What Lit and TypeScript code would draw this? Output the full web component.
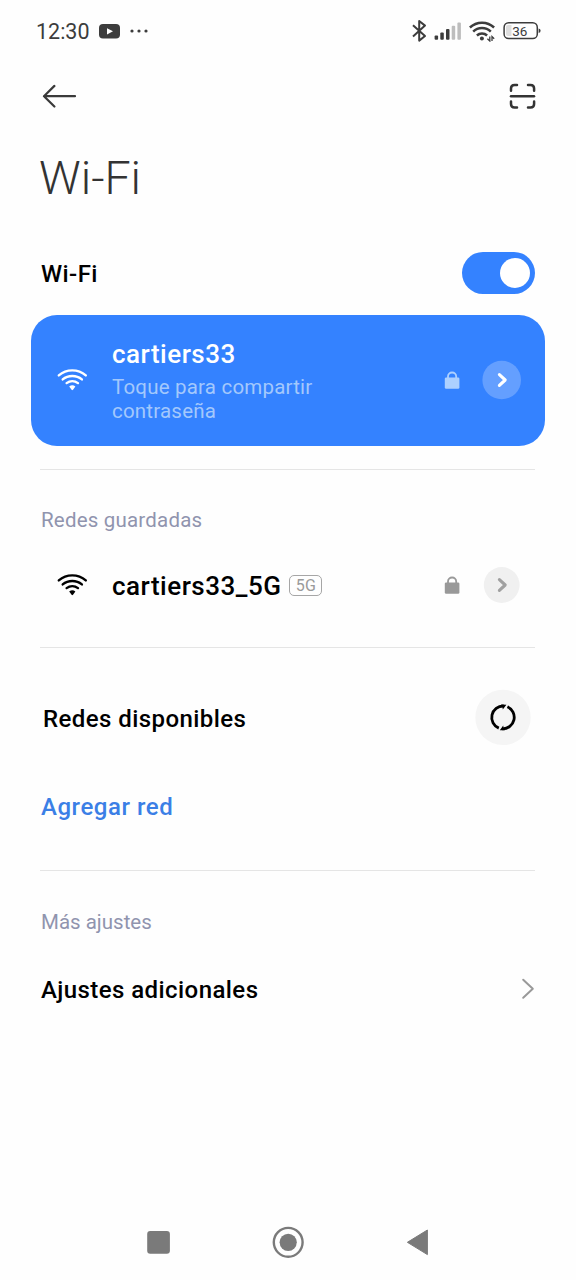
import { LitElement, html, css, svg } from "lit";
import { customElement, property } from "lit/decorators.js";

const glyph = (x: number, y: number, w: number, h: number, body: unknown) => html`
  <svg width=${w} height=${h} viewBox="${x} ${y} ${w} ${h}" fill="none" aria-hidden="true">${body}</svg>`;

const baseStyles = css`
  :host { display: block; font-family: Roboto, "Noto Sans", sans-serif; color: #000; }
  * { box-sizing: border-box; }
  svg { display: block; flex: none; }
`;

const wifiGlyph = glyph(57, 368, 31, 24, svg`
  <g stroke="currentColor" stroke-width="2.4" stroke-linecap="round">
    <path d="M58.8 375.4A20.5 20.5 0 0 1 85.8 375.4"/>
    <path d="M62.7 379.4A15 15 0 0 1 81.9 379.4"/>
    <path d="M66.6 383.1A9.6 9.6 0 0 1 78 383.1"/>
  </g>
  <path d="M69.2 386.4Q72.3 384.2 75.4 386.4L73 389.8Q72.3 390.6 71.6 389.8Z" fill="currentColor"/>`);

const lockGlyph = glyph(444, 370, 16, 19, svg`
  <rect x="444.8" y="376.4" width="14.6" height="11.4" rx="1.4" fill="currentColor"/>
  <path d="M448 377.5V375.6a4.1 4.1 0 0 1 8.2 0V377.5" stroke="currentColor" stroke-width="1.8"/>`);

@customElement("status-bar")
class StatusBar extends LitElement {
  static styles = [baseStyles, css`
    .bar { height: 62px; padding: 0 34px 0 36px; display: flex; align-items: center; justify-content: space-between; color: #3c3c3c; }
    .side { display: flex; align-items: center; }
    .time { font-size: 21.5px; line-height: 26px; width: 63px; padding-top: 1px; }
    .more { margin-left: 9px; }
    .right { gap: 7px; }
    .battery { font: 400 13.5px Roboto, sans-serif; }
  `];
  render() {
    return html`<div class="bar">
      <div class="side">
        <span class="time">12:30</span>
        ${glyph(99, 20, 21, 22, svg`
          <rect x="99" y="24" width="21" height="14.6" rx="4" fill="#3c3c3c"/>
          <path d="M107 28.2L113 31.3L107 34.4Z" fill="#fff"/>`)}
        <span class="more">${glyph(129, 20, 20, 22, svg`
          <g fill="#3c3c3c"><circle cx="132" cy="31" r="1.6"/><circle cx="139" cy="31" r="1.6"/><circle cx="146" cy="31" r="1.6"/></g>`)}</span>
      </div>
      <div class="side right">
        ${glyph(411, 19, 16, 24, svg`<path d="M413 25.3L425 36L419.2 40.6V21L425 25.6L413 36.4" stroke="#3c3c3c" stroke-width="2" stroke-linejoin="round"/>`)}
        ${glyph(434, 20, 28, 22, svg`
          <g fill="#3c3c3c"><rect x="434.6" y="35.6" width="3.5" height="4.2" rx="1"/><rect x="440.3" y="32.4" width="3.5" height="7.4" rx="1"/><rect x="446" y="29.1" width="3.5" height="10.7" rx="1"/></g>
          <g fill="#bdbdbd"><rect x="451.7" y="25.8" width="3.5" height="14" rx="1"/><rect x="457.4" y="22.6" width="3.5" height="17.2" rx="1"/></g>`)}
        ${glyph(469, 20, 27, 22, svg`
          <g stroke="#3c3c3c" stroke-width="2.5"><path d="M469.9 27.5A17.5 17.5 0 0 1 494.1 27.5"/><path d="M473.2 31.7A12.4 12.4 0 0 1 490.8 31.7"/><path d="M476.9 35.5A7.6 7.6 0 0 1 487.1 35.5"/></g>
          <circle cx="481.9" cy="38.6" r="2" fill="#3c3c3c"/>
          <path d="M489.8 36.6V41L487.4 38.8M492 41V36.6L494.2 38.8" stroke="#3c3c3c" stroke-width="1.3"/>`)}
        ${glyph(503, 20, 39, 22, svg`
          <path d="M508 25H511.5V36H508A2 2 0 0 1 506 34V27A2 2 0 0 1 508 25Z" fill="#dedede"/>
          <rect x="504.1" y="22.8" width="33.2" height="15.8" rx="4.6" stroke="#3c3c3c" stroke-width="1.5"/>
          <path d="M538.6 28.4Q540.6 28.6 540.6 30.7Q540.6 32.8 538.6 33Z" fill="#3c3c3c"/>
          <text class="battery" x="519.8" y="35.7" text-anchor="middle" fill="#3c3c3c">36</text>`)}
      </div>
    </div>`;
  }
}

@customElement("network-row")
class NetworkRow extends LitElement {
  @property() name = "";
  @property() detail = "";
  @property() band = "";
  @property({ type: Boolean }) connected = false;
  static styles = [baseStyles, css`
    .row { display: flex; align-items: center; margin: 0 31px; padding-left: 26px; height: 76px; }
    .connected { height: 131px; border-radius: 26px; background: #3482ff; color: #fff; }
    .text { flex: 1; margin-left: 24px; padding-top: 1px; }
    .line { display: flex; align-items: center; gap: 8px; }
    .name { font-size: 26px; line-height: 30px; font-weight: 500; letter-spacing: .5px; }
    .detail { width: 230px; font-size: 20.5px; line-height: 24px; color: #a3c8fc; margin-top: 6px; letter-spacing: .2px; }
    .band { height: 21px; width: 33px; border: 1.5px solid #a6a6a6; border-radius: 5px; font-size: 16px; line-height: 20px; text-align: center; color: #9a9a9a; letter-spacing: .3px; margin-bottom: 1px; }
    .lock { color: #999; margin-right: 22px; }
    .connected .lock { color: #add0ff; }
    .go { width: 63px; }
  `];
  render() {
    return html`<div class="row ${this.connected ? "connected" : ""}">
      ${wifiGlyph}
      <div class="text">
        <div class="line"><span class="name">${this.name}</span>${this.band ? html`<span class="band">${this.band}</span>` : ""}</div>
        ${this.detail ? html`<div class="detail">${this.detail}</div>` : ""}
      </div>
      <span class="lock">${lockGlyph}</span>
      <span class="go">${glyph(482, 360, 40, 40, svg`
        <circle cx="501.7" cy="380" r=${this.connected ? 19.3 : 17.9} fill=${this.connected ? "#649fff" : "#f0f0f0"}/>
        <path d="M499.4 374.6L505.2 380L499.4 385.4" stroke=${this.connected ? "#fff" : "#a0a0a0"} stroke-width="3.1" stroke-linecap="round" stroke-linejoin="round"/>`)}</span>
    </div>`;
  }
}

@customElement("nav-bar")
class NavBar extends LitElement {
  static styles = [baseStyles, css`
    .nav { display: flex; align-items: center; justify-content: space-between; height: 76px; padding: 0 147px 0 146px; }
  `];
  render() {
    return html`<div class="nav">
      ${glyph(146, 1226, 25, 32, svg`<rect x="147.2" y="1231" width="22.7" height="22.7" rx="3" fill="#7a7a7a"/>`)}
      ${glyph(272, 1226, 33, 32, svg`<circle cx="288.2" cy="1242.3" r="14.4" stroke="#7a7a7a" stroke-width="2.4"/><circle cx="288.2" cy="1242.3" r="8.6" fill="#7a7a7a"/>`)}
      ${glyph(406, 1226, 23, 32, svg`<path d="M407.4 1242.3L427.4 1230V1254.6Z" fill="#7a7a7a" stroke="#7a7a7a" stroke-linejoin="round"/>`)}
    </div>`;
  }
}

@customElement("app-root")
class AppRoot extends LitElement {
  static styles = [baseStyles, css`
    .screen { width: 576px; height: 1280px; background: #fefefe; display: flex; flex-direction: column; overflow: hidden; }
    .bar { height: 68px; padding: 0 39px 0 42px; display: flex; align-items: center; justify-content: space-between; }
    .title { margin: 0; height: 94px; padding-left: 39px; font-size: 46.5px; line-height: 96px; font-weight: 300; color: #333; }
    .row { display: flex; align-items: center; justify-content: space-between; padding: 0 41px; font-size: 24px; line-height: 28px; font-weight: 500; letter-spacing: .43px; }
    .wifi { height: 90.5px; padding-top: 7px; }
    .wifi > span:first-child, .available > span { padding-top: 2px; }
    .toggle { width: 73px; height: 41.5px; padding: 0 5px; border-radius: 21px; background: #3482ff; display: flex; align-items: center; justify-content: flex-end; }
    .knob { width: 30px; height: 30px; border-radius: 50%; background: #fff; }
    .divider { height: 1px; flex: none; background: #e5e5e5; margin: 0 41px 0 40px; }
    .first { margin-top: 23.5px; }
    .label { padding: 0 41px; font-size: 20.5px; line-height: 24px; color: #9094ae; }
    .saved { margin: 38px 0 15px; letter-spacing: .2px; }
    .gap { height: 24px; }
    .available { height: 139px; padding: 0 45px 0 43px; }
    .add { height: 40px; color: #3b7fe6; letter-spacing: .55px; }
    .space { height: 43px; }
    .other { margin: 39px 0 34px; }
    .extra { height: 43px; }
    .extra svg { margin-bottom: 2px; }
    .fill { flex: 1; }
  `];
  render() {
    return html`<main class="screen">
      <status-bar></status-bar>
      <div class="bar">
        ${glyph(42, 84, 35, 24, svg`<path d="M75 96.2H44M54.4 85.9L44 96.2L54.4 106.5" stroke="#3a3a3a" stroke-width="2.2" stroke-linecap="round" stroke-linejoin="round"/>`)}
        ${glyph(508, 82, 29, 28, svg`<g stroke="#333" stroke-width="2.5" stroke-linecap="round">
          <path d="M511 96.2H534"/>
          <path d="M511 90.8V88.6Q511 85 514.6 85H517M528 85H530.5Q534.1 85 534.1 88.6V90.8M534.1 101.6V104Q534.1 107.5 530.5 107.5H528M517 107.5H514.6Q511 107.5 511 104V101.6"/></g>`)}
      </div>
      <h1 class="title">Wi-Fi</h1>
      <div class="row wifi"><span>Wi-Fi</span><span class="toggle"><span class="knob"></span></span></div>
      <network-row connected name="cartiers33" detail="Toque para compartir contraseña"></network-row>
      <div class="divider first"></div>
      <div class="label saved">Redes guardadas</div>
      <network-row name="cartiers33_5G" band="5G"></network-row>
      <div class="gap"></div>
      <div class="divider"></div>
      <div class="row available"><span>Redes disponibles</span>
        ${glyph(475, 689, 56, 57, svg`
          <circle cx="503" cy="717.4" r="27.7" fill="#f5f5f5"/>
          <g stroke="#000" stroke-width="2.8"><path d="M498.8 728.1A11.5 11.5 0 0 1 503.6 706"/><path d="M507.4 706.8A11.5 11.5 0 0 1 502.4 728.8"/></g>
          <path d="M501 704.5L506.4 704.7L502.8 709.4L502.4 706.8ZM505 730.3L499.8 730.2L503.2 725.4L503.6 728Z" fill="#000"/>`)}
      </div>
      <div class="row add"><span>Agregar red</span></div>
      <div class="space"></div>
      <div class="divider"></div>
      <div class="label other">Más ajustes</div>
      <div class="row extra"><span>Ajustes adicionales</span>
        ${glyph(520, 977, 15, 24, svg`<path d="M523.2 979.8L532.8 988.8L523.2 997.8" stroke="#999" stroke-width="2" stroke-linecap="round" stroke-linejoin="round"/>`)}
      </div>
      <div class="fill"></div>
      <nav-bar></nav-bar>
    </main>`;
  }
}
